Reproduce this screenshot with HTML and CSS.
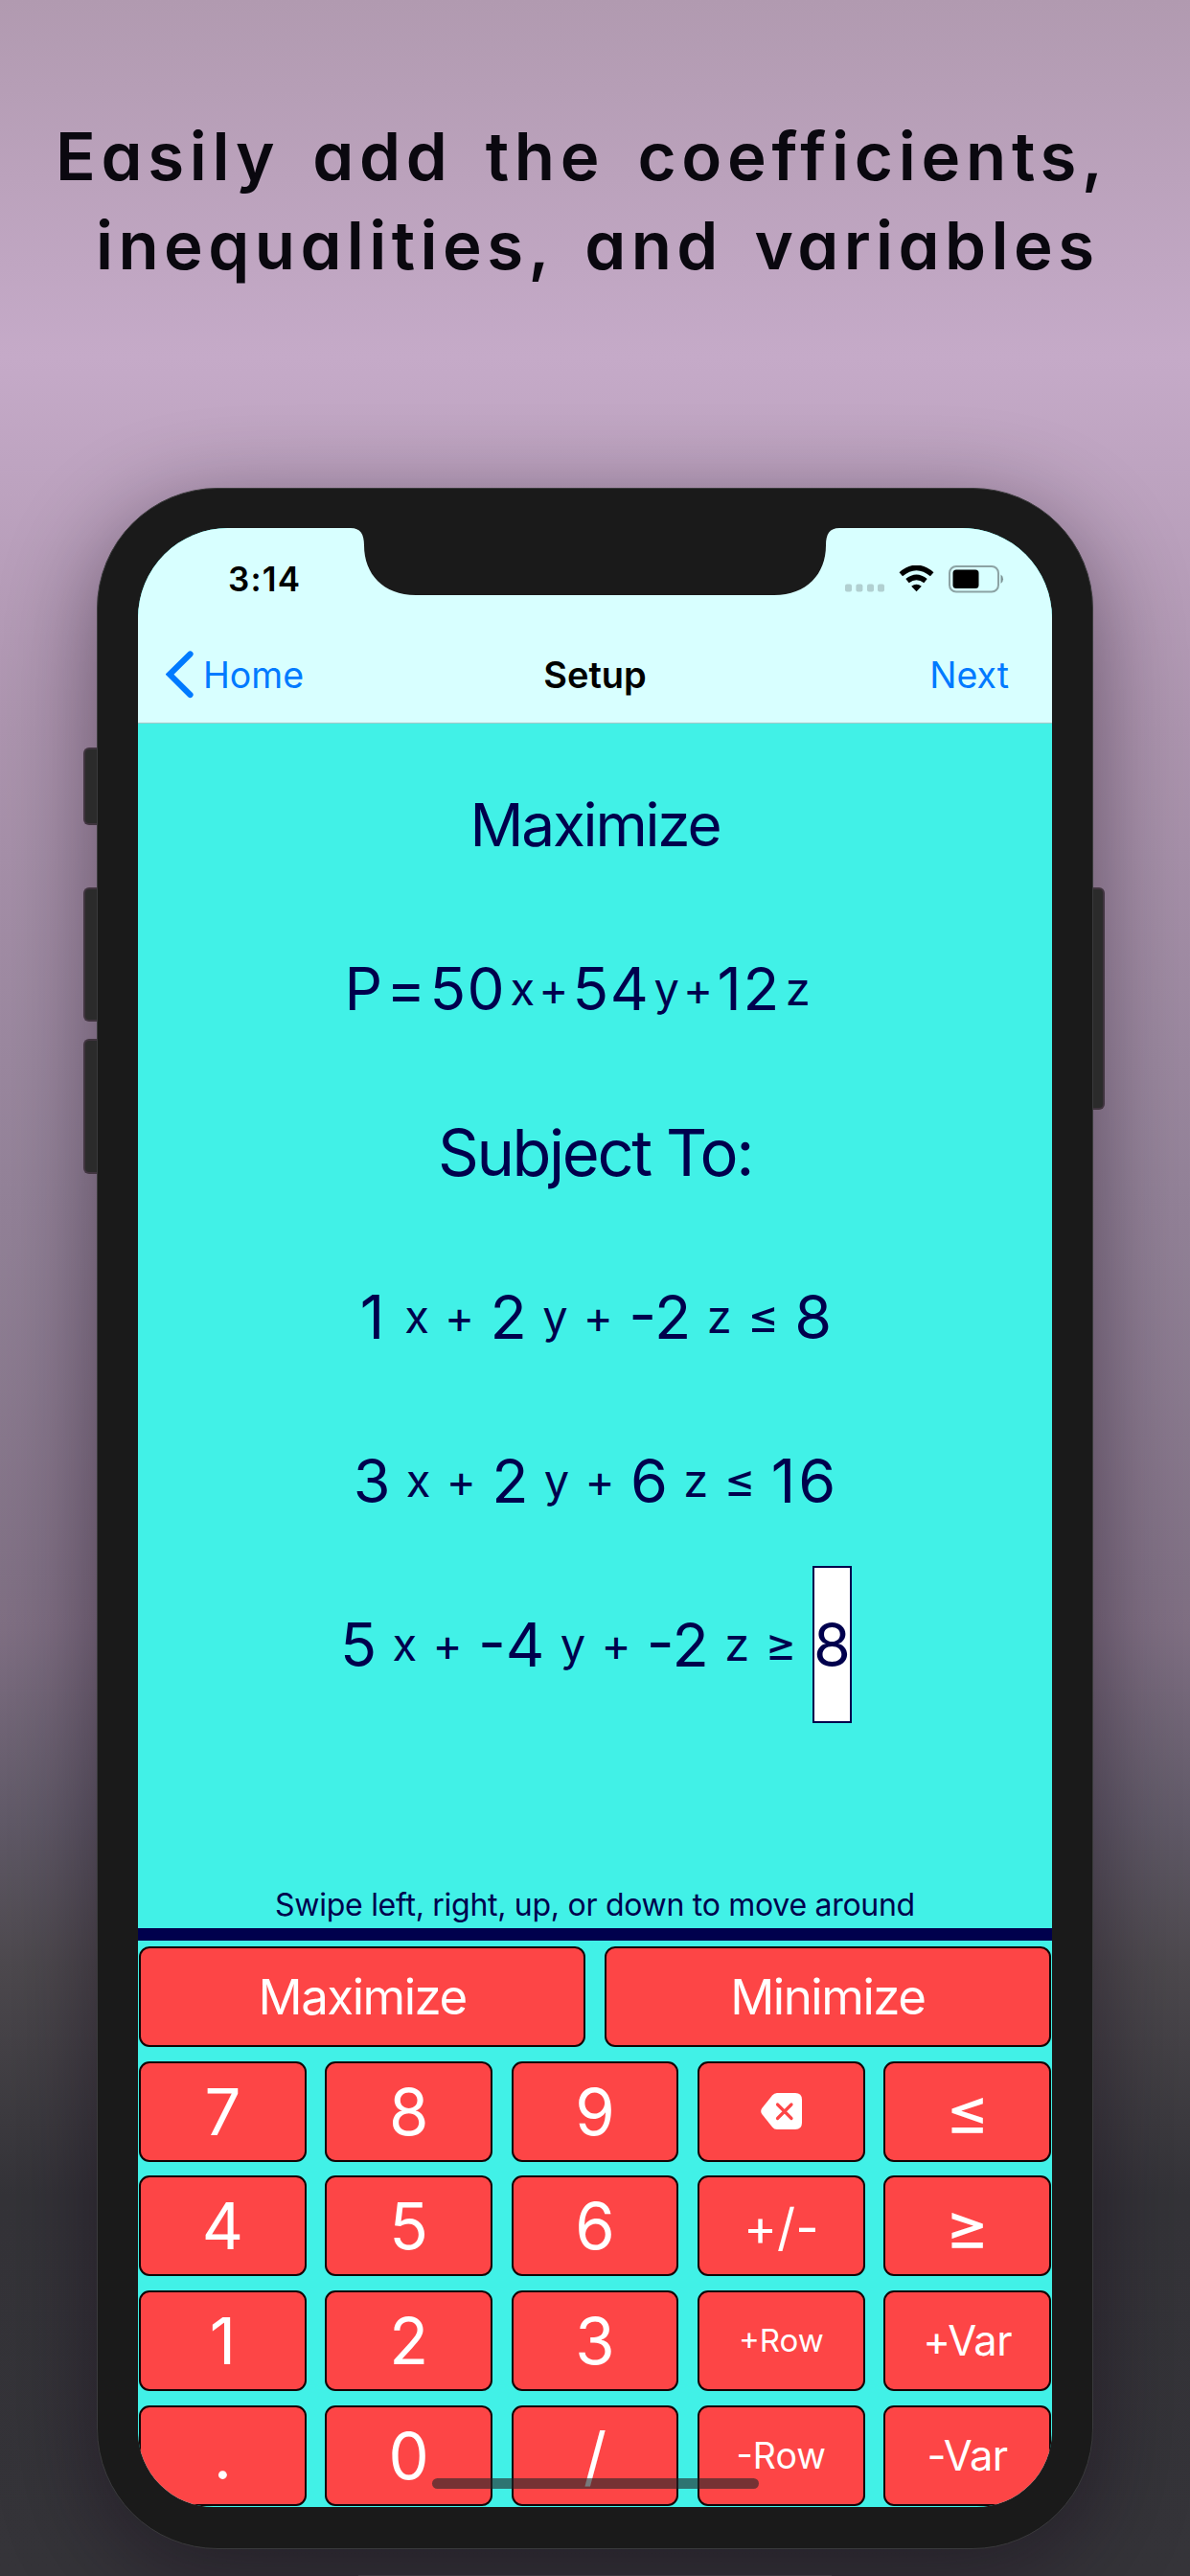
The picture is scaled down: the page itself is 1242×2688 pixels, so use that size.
FILE: index.html
```html
<!DOCTYPE html>
<html lang="en">
<head>
<meta charset="utf-8">
<title>Setup</title>
<link rel="stylesheet" href="styles.css">
</head>
<body>
<main class="poster">
  <h1 class="headline">
    <span class="headline-top">Easily add the coefficients,</span>
    <span class="headline-bottom">inequalities, and variables</span>
  </h1>

  <div class="phone">
    <i class="side-button mute"></i>
    <i class="side-button volume-up"></i>
    <i class="side-button volume-down"></i>
    <i class="side-button power"></i>

    <div class="screen">
      <svg class="notch" viewBox="0 0 510 70" aria-hidden="true">
        <path d="M0 0C10 0 14 6 14 18C14 48 34 70 68 70H442C476 70 496 48 496 18C496 6 500 0 510 0Z" fill="#1a1a1a"/>
      </svg>

      <header class="top">
        <div class="status">
          <span class="clock">3:14</span>
          <div class="indicators">
            <svg width="44" height="28" viewBox="0 0 44 28"><g fill="#b1d0d1"><rect x="1" y="19.500" width="7" height="8" rx="2"/><rect x="12.400" y="19.500" width="7" height="8" rx="2"/><rect x="24" y="19.500" width="7" height="8" rx="2"/><rect x="35" y="19.500" width="7" height="8" rx="2"/></g></svg>
            <svg class="wifi" width="37" height="28" viewBox="0 0 37 28"><path d="M2.300 9.200Q18.500-4.500 34.700 9.200M9 16.200Q18.500 8.500 28 16.200" fill="none" stroke="#000" stroke-width="5.400"/><path d="M13.200 21.800Q18.500 17.500 23.800 21.800L18.500 27.300Z"/></svg>
            <svg class="battery" width="58" height="29" viewBox="0 0 58 29"><rect x="1" y="1" width="51" height="26.500" rx="7" fill="none" stroke="#8ca3a4" stroke-width="2"/><rect x="4.500" y="4.500" width="27" height="19.500" rx="3.500"/><path d="M54.500 9.500Q57 11 57 14.300T54.500 19Z" fill="#7f9596"/></svg>
          </div>
        </div>
        <nav class="nav">
          <span class="back"><svg width="30" height="50" viewBox="0 0 30 50"><path d="M25.500 3.500L4 24.700L25.500 46" fill="none" stroke="#007aff" stroke-width="6.200" stroke-linecap="round" stroke-linejoin="miter"/></svg>Home</span>
          <b class="title">Setup</b>
          <span class="next">Next</span>
        </nav>
      </header>

      <section class="problem">
        <div class="row heading">Maximize</div>
        <div class="row objective"><span>P</span><span>=</span><span class="coef">50</span><small>x</small><small>+</small><span class="coef">54</span><small>y</small><small>+</small><span class="coef twelve">12</span><small>z</small></div>
        <div class="row heading subject">Subject To:</div>
        <div class="row constraint"><span class="one">1</span><small>x</small><small>+</small><span>2</span><small>y</small><small>+</small><span>-2</span><small>z</small><small class="relation">≤</small><span>8</span></div>
        <div class="row constraint"><span>3</span><small>x</small><small>+</small><span>2</span><small>y</small><small>+</small><span>6</span><small>z</small><small class="relation">≤</small><span class="sixteen">16</span></div>
        <div class="row constraint"><span>5</span><small>x</small><small>+</small><span>-4</span><small>y</small><small>+</small><span>-2</span><small>z</small><small class="relation">≥</small><span class="selected">8</span></div>
      </section>

      <p class="hint">Swipe left, right, up, or down to move around</p>

      <section class="keypad">
        <button class="key goal">Maximize</button><button class="key goal">Minimize</button>
      </section>
      <section class="keypad digits">
        <button class="key">7</button><button class="key">8</button><button class="key">9</button>
        <button class="key" aria-label="Delete"><svg class="delete" width="43" height="38" viewBox="0 0 43 38"><path d="M17 0H36Q43 0 43 7V31Q43 38 36 38H17Q14 38 12 35.500L1.200 22Q-.8 19 1.200 16L12 2.500Q14 0 17 0Z" fill="#fff"/><path d="M17.500 12L32 26.500M32 12L17.500 26.500" stroke="#fd4546" stroke-width="3.200" stroke-linecap="round"/></svg></button>
        <button class="key compare">≤</button>
        <button class="key">4</button><button class="key">5</button><button class="key">6</button>
        <button class="key sign">+/-</button><button class="key compare">≥</button>
        <button class="key">1</button><button class="key">2</button><button class="key">3</button>
        <button class="key add-row">+Row</button><button class="key var">+Var</button>
        <button class="key">.</button><button class="key">0</button><button class="key">/</button>
        <button class="key drop-row">-Row</button><button class="key var">-Var</button>
      </section>
      <i class="home-indicator"></i>
    </div>
  </div>
  <i class="edge"></i>
</main>
</body>
</html>
```
FILE: styles.css
```css
* { box-sizing: border-box; }

body {
  margin: 0;
  font-family: Inter, "Liberation Sans", sans-serif;
}

.poster {
  display: flex;
  flex-direction: column;
  align-items: center;
  width: 1242px;
  height: 2688px;
  overflow: hidden;
  background: linear-gradient(#b19ab0 0, #c5aac8 372px, #ad95af 760px, #948399 1240px, #7f6f83 1700px, #615a68 1900px, #4d494e 2050px, #343338 2290px, #353439 2688px);
}

.headline {
  display: flex;
  flex-direction: column;
  width: 100%;
  height: 509px;
  margin: 0;
  padding-top: 117px;
  color: #0a080f;
  font-size: 69px;
  font-weight: 600;
  line-height: 93px;
  font-feature-settings: "cv11";
  white-space: nowrap;
}

.headline-top {
  padding-left: 58px;
  letter-spacing: 5.700px;
  word-spacing: 11px;
}

.headline-bottom {
  padding-left: 100px;
  letter-spacing: 5.400px;
  word-spacing: 10px;
}

.phone {
  position: relative;
  flex: none;
  width: 1040px;
  height: 2151px;
  padding: 41px 42px 0;
  border: 1px solid #3a3a3c;
  border-radius: 126px;
  background: #1a1a1a;
  box-shadow: 0 24px 100px rgba(15, 5, 20, 0.46);
}

.side-button {
  position: absolute;
  left: -15px;
  width: 14px;
  border: 2px solid #40343f;
  border-right: 0;
  border-radius: 6px 0 0 6px;
  background: #2b2b2b;
}

.mute { top: 270px; height: 81px; }
.volume-up { top: 416px; height: 140px; }
.volume-down { top: 574px; height: 141px; }

.power {
  top: 416px;
  right: -13px;
  left: auto;
  width: 12px;
  height: 232px;
  border: 2px solid #40343f;
  border-left: 0;
  border-radius: 0 6px 6px 0;
}

.screen {
  position: relative;
  display: flex;
  flex-direction: column;
  width: 954px;
  height: 2065px;
  overflow: hidden;
  border-radius: 94px 94px 79px 79px;
  background: #41f1e7;
}

.notch {
  position: absolute;
  top: 0;
  left: 222px;
  width: 510px;
  height: 70px;
}

.top {
  flex: none;
  height: 204px;
  border-bottom: 1px solid #a5c8c8;
  background: #d8ffff;
}

.status {
  display: flex;
  align-items: center;
  justify-content: space-between;
  height: 106px;
  padding: 0 50px 0 94px;
}

.clock {
  font-size: 35px;
  font-weight: 600;
  letter-spacing: 1.200px;
}

.indicators {
  display: flex;
  align-items: center;
}

.wifi { margin-left: 13px; }
.battery { margin-left: 15px; }

.nav {
  display: grid;
  grid-template-columns: 1fr auto 1fr;
  align-items: center;
  height: 94px;
  padding: 0 45px 0 29px;
  color: #007aff;
  font-size: 37.500px;
}

.back {
  display: flex;
  align-items: center;
  gap: 9px;
}

.title {
  padding-left: 16px;
  color: #000;
  font-size: 38px;
  font-weight: 600;
}

.next { text-align: right; }

.problem {
  flex: none;
  height: 1192px;
  padding-top: 20px;
  color: #00004d;
}

.row {
  display: flex;
  align-items: center;
  justify-content: center;
  height: 171px;
  font-size: 62px;
}

.row small { font-size: 47px; }

.heading { letter-spacing: -2.200px; }

.subject {
  font-size: 66.800px;
  letter-spacing: -2.400px;
}

.objective {
  gap: 4.200px;
  padding-right: 37px;
}

.coef { letter-spacing: 1.500px; }
.twelve { letter-spacing: 2px; }

.constraint {
  gap: 16.300px;
  padding-left: 2px;
  font-size: 62.800px;
}

.row .relation { font-size: 50px; }
.one { width: 30px; }
.sixteen { letter-spacing: 3px; }

.selected {
  display: flex;
  align-items: center;
  justify-content: center;
  width: 41px;
  height: 164px;
  border: 2px solid #00004d;
  background: #fff;
}

.hint {
  flex: none;
  height: 78px;
  margin: 0;
  padding-top: 23px;
  border-bottom: 13px solid #00004d;
  color: #00004d;
  font-size: 32px;
  line-height: 36px;
  letter-spacing: -0.280px;
  text-align: center;
}

.keypad {
  display: grid;
  grid-template-columns: repeat(2, 1fr);
  grid-auto-rows: 105px;
  gap: 14.700px 19.400px;
  padding: 6px 1px 0;
}

.digits {
  grid-template-columns: repeat(5, 1fr);
  padding-top: 14.700px;
}

.key {
  display: flex;
  align-items: center;
  justify-content: center;
  padding: 0;
  border: 2px solid #110405;
  border-radius: 11px;
  background: #fd4546;
  color: #fff;
  font-family: inherit;
  font-size: 67px;
  line-height: 1;
}

.goal {
  font-size: 51px;
  letter-spacing: -1.500px;
}

.delete { margin-bottom: 1px; }

.compare { font-size: 70px; }

.sign {
  padding-top: 3px;
  font-size: 53px;
}

.add-row { font-size: 33px; }
.drop-row { font-size: 37.500px; }

.var {
  font-size: 43.500px;
  letter-spacing: -0.600px;
}

.home-indicator {
  position: absolute;
  bottom: 19px;
  left: 307px;
  width: 341px;
  height: 11px;
  border-radius: 6px;
  background: rgba(35, 38, 42, 0.62);
}

.edge {
  flex: none;
  width: 494px;
  height: 1px;
  margin-top: 27px;
  background: #48484a;
}
```
